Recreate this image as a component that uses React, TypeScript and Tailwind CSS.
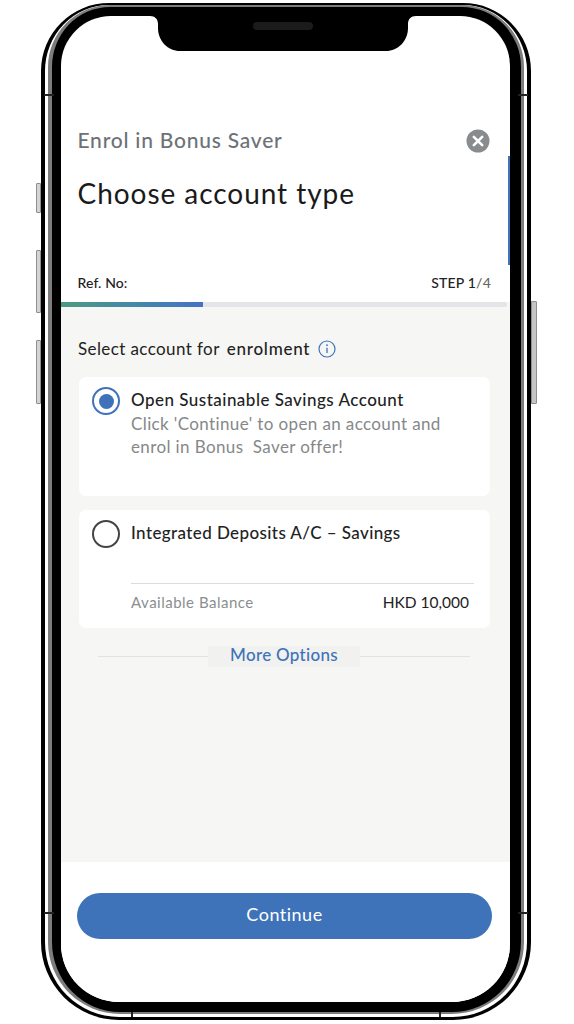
export default function App() {
  return (
    <div className="w-[574px] h-[1024px] bg-white pt-[3px] pl-[41px] overflow-hidden font-['Lato','Liberation_Sans',sans-serif]">
      <div className="relative w-[490px] h-[1017px]">
        {/* side buttons */}
        <div className="absolute left-[-5px] top-[180px] w-[5px] h-[30px] bg-[#d4d4d4] border border-[#8f8f8f] rounded-l-[1px]" />
        <div className="absolute left-[-5px] top-[247px] w-[5px] h-[63px] bg-[#d4d4d4] border border-[#8f8f8f] rounded-l-[1px]" />
        <div className="absolute left-[-5px] top-[337px] w-[5px] h-[64px] bg-[#d4d4d4] border border-[#8f8f8f] rounded-l-[1px]" />
        <div className="absolute right-[-6px] top-[298px] w-[6px] h-[103px] bg-[#c4c4c4] border border-[#8f8f8f] rounded-r-[1px]" />
        {/* frame bands */}
        <div className="absolute left-[3px] top-[91px] w-[10px] h-[2px] bg-[#222]" />
        <div className="absolute right-[3px] top-[91px] w-[10px] h-[2px] bg-[#222]" />
        <div className="absolute left-[3px] top-[909px] w-[10px] h-[2px] bg-[#222]" />
        <div className="absolute right-[3px] top-[909px] w-[10px] h-[2px] bg-[#222]" />
        <div className="absolute left-[90px] bottom-[3px] w-[2px] h-[5px] bg-[#222]" />
        <div className="absolute right-[90px] bottom-[3px] w-[2px] h-[5px] bg-[#222]" />

        <div className="w-full h-full border-black border-t-[2px] border-x-[4px] border-b-[3px] rounded-t-[68px] rounded-b-[78px] bg-white pt-0 px-[3px] pb-[3px]">
          <div className="w-full h-full border-[#7d7d7d] border-t-[2px] border-l-[4px] border-r-[3px] border-b-[2px] rounded-t-[62px] rounded-b-[72px] bg-black pt-[9px] pl-[9px] pr-[11px] pb-[10px]">
            <div className="relative w-full h-full bg-white rounded-t-[50px] rounded-b-[58px] overflow-hidden flex flex-col">
              {/* notch */}
              <div className="absolute left-[89px] top-0 w-[266px] h-[35px] flex justify-center pt-[6px]">
                <svg width="266" height="35" viewBox="0 0 266 35" className="absolute left-0 top-0">
                  <path d="M0 0H266C261 0 258 3 258 8V12C258 25 248 35 236 35H30C18 35 8 25 8 12V8C8 3 5 0 0 0Z" fill="#000" />
                </svg>
                <div className="relative w-[60px] h-[8px] rounded-full bg-[#1b1b1b]" />
              </div>
              <div className="absolute right-0 top-[140px] w-[2px] h-[109px] bg-[#3e73b9]" />

              {/* header */}
              <div className="pt-[110px] pl-[17px] pr-[19px] shrink-0">
                <div className="flex items-center justify-between">
                  <h2 className="-ml-[0.5px] text-[21px] leading-[28px] font-medium text-[#6d7276] tracking-[0.77px]">Enrol in Bonus Saver</h2>
                  <svg width="24" height="24" viewBox="0 0 24 24" className="mt-[2px] mr-[1px]">
                    <circle cx="12" cy="12" r="11.5" fill="#898c8e" />
                    <path d="M7.8 7.8l8.4 8.4M16.2 7.8l-8.4 8.4" stroke="#fff" strokeWidth="2.6" strokeLinecap="round" />
                  </svg>
                </div>
                <h1 className="-ml-[0.5px] mt-[21px] text-[28px] leading-[36px] font-normal text-[#1a1a1a] tracking-[0.95px]">Choose account type</h1>
                <div className="mt-[61px] flex items-center justify-between h-[20px] text-[14px] text-[#222]">
                  <span className="font-medium -ml-[0.5px] tracking-[0.1px]">Ref. No:</span>
                  <span className="font-medium tracking-[0.2px]">STEP 1<span className="text-[#666]">/4</span></span>
                </div>
              </div>

              {/* progress */}
              <div className="mt-[10px] h-[5px] shrink-0 pr-[3px] bg-[#f6f6f4]">
                <div className="h-full bg-[#e3e5e8] rounded-r-full">
                  <div className="h-full w-[142px] bg-gradient-to-r from-[#4b9a83] to-[#4472c4]" />
                </div>
              </div>

              {/* content */}
              <div className="flex-1 bg-[#f6f6f4] pt-[30px] pl-[18px] pr-[20px]">
                <div className="flex items-center h-[24px] -ml-[1px] text-[17px] text-[#222]">
                  <span className="tracking-[0.4px]">Select account for</span>
                  <span className="ml-[7px] font-medium tracking-[0.75px]">enrolment</span>
                  <svg width="18" height="18" viewBox="0 0 18 18" className="ml-[8px]">
                    <circle cx="9" cy="9" r="8" fill="none" stroke="#3f73ba" strokeWidth="1.2" />
                    <circle cx="9" cy="5.2" r="0.9" fill="#3f73ba" />
                    <path d="M9 7.8v5.2" stroke="#3f73ba" strokeWidth="1.3" />
                  </svg>
                </div>

                <div className="mt-[16px] h-[119px] bg-white rounded-[7px] flex pl-[13px] pt-[10px] pr-[20px]">
                  <div className="w-[28px] h-[28px] rounded-full border-[2.5px] border-[#3e73b9] shrink-0 flex items-center justify-center">
                    <div className="w-[15px] h-[15px] rounded-full bg-[#3e73b9]" />
                  </div>
                  <div className="ml-[11px]">
                    <div className="text-[17px] leading-[26px] font-medium text-[#222] tracking-[0.48px]">Open Sustainable Savings Account</div>
                    <div className="text-[17px] leading-[23px] text-[#85888a] tracking-[0.38px] -mt-[1px]">
                      Click 'Continue' to open an account and<br />enrol in Bonus&nbsp; Saver offer!
                    </div>
                  </div>
                </div>

                <div className="mt-[14px] h-[118px] bg-white rounded-[7px] flex pl-[13px] pt-[10px] pr-[16px]">
                  <div className="w-[28px] h-[28px] rounded-full border-[2px] border-[#444] shrink-0" />
                  <div className="ml-[11px] flex-1">
                    <div className="text-[17px] leading-[26px] font-medium text-[#222] tracking-[0.4px]">Integrated Deposits A/C – Savings</div>
                    <div className="mt-[37px] pt-[8px] border-t border-[#dcdcdc] flex items-center justify-between pr-[5px]">
                      <span className="text-[15px] leading-[20px] text-[#8b8e90] tracking-[0.5px]">Available Balance</span>
                      <span className="text-[15.5px] leading-[20px] text-[#222]">HKD 10,000</span>
                    </div>
                  </div>
                </div>

                <div className="mt-[18px] flex items-center pl-[19px] pr-[20px]">
                  <div className="flex-1 h-px bg-[#e2e2e2]" />
                  <div className="w-[152px] h-[21px] bg-[#f1f1ef] flex items-center justify-center pb-[3px] text-[17px] font-medium text-[#3e73b9] tracking-[0.3px]">More Options</div>
                  <div className="flex-1 h-px bg-[#e2e2e2]" />
                </div>
              </div>

              {/* footer */}
              <div className="h-[140px] shrink-0 bg-white pt-[31px] pl-[16px] pr-[18px]">
                <button className="w-full h-[46px] rounded-full bg-[#3e73b9] pb-[3px] text-white text-[18px] tracking-[0.5px]">Continue</button>
              </div>
            </div>
          </div>
        </div>
      </div>
    </div>
  );
}
